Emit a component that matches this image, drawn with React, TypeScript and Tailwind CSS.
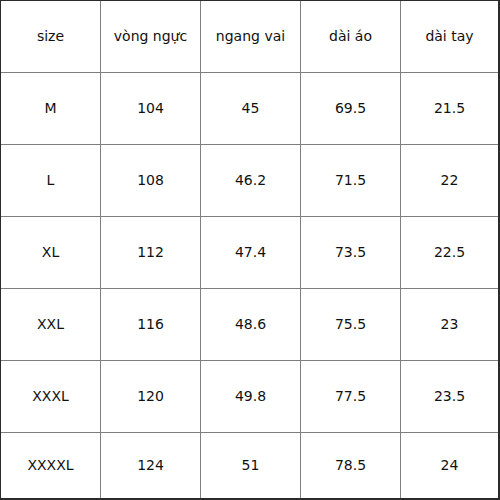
const headers = ['size', 'vòng ngực', 'ngang vai', 'dài áo', 'dài tay']

const rows = [
  ['M', '104', '45', '69.5', '21.5'],
  ['L', '108', '46.2', '71.5', '22'],
  ['XL', '112', '47.4', '73.5', '22.5'],
  ['XXL', '116', '48.6', '75.5', '23'],
  ['XXXL', '120', '49.8', '77.5', '23.5'],
  ['XXXXL', '124', '51', '78.5', '24'],
]

export default function App() {
  return (
    <div className="w-[500px] h-[500px] bg-[#2b2b2b] pl-px pt-px pr-[2px] pb-[2px]">
      <div
        className="grid h-full gap-px bg-[#7f7f7f] grid-cols-[99px_99px_99px_99px_1fr] grid-rows-[71px_71px_71px_71px_71px_71px_1fr] text-[14px] text-[#111]"
        style={{ fontFamily: '"DejaVu Sans", Verdana, sans-serif' }}
      >
        {[headers, ...rows].map((row, i) =>
          row.map((cell, j) => (
            <div key={`${i}-${j}`} className="bg-white flex items-center justify-center">
              {cell}
            </div>
          ))
        )}
      </div>
    </div>
  )
}
